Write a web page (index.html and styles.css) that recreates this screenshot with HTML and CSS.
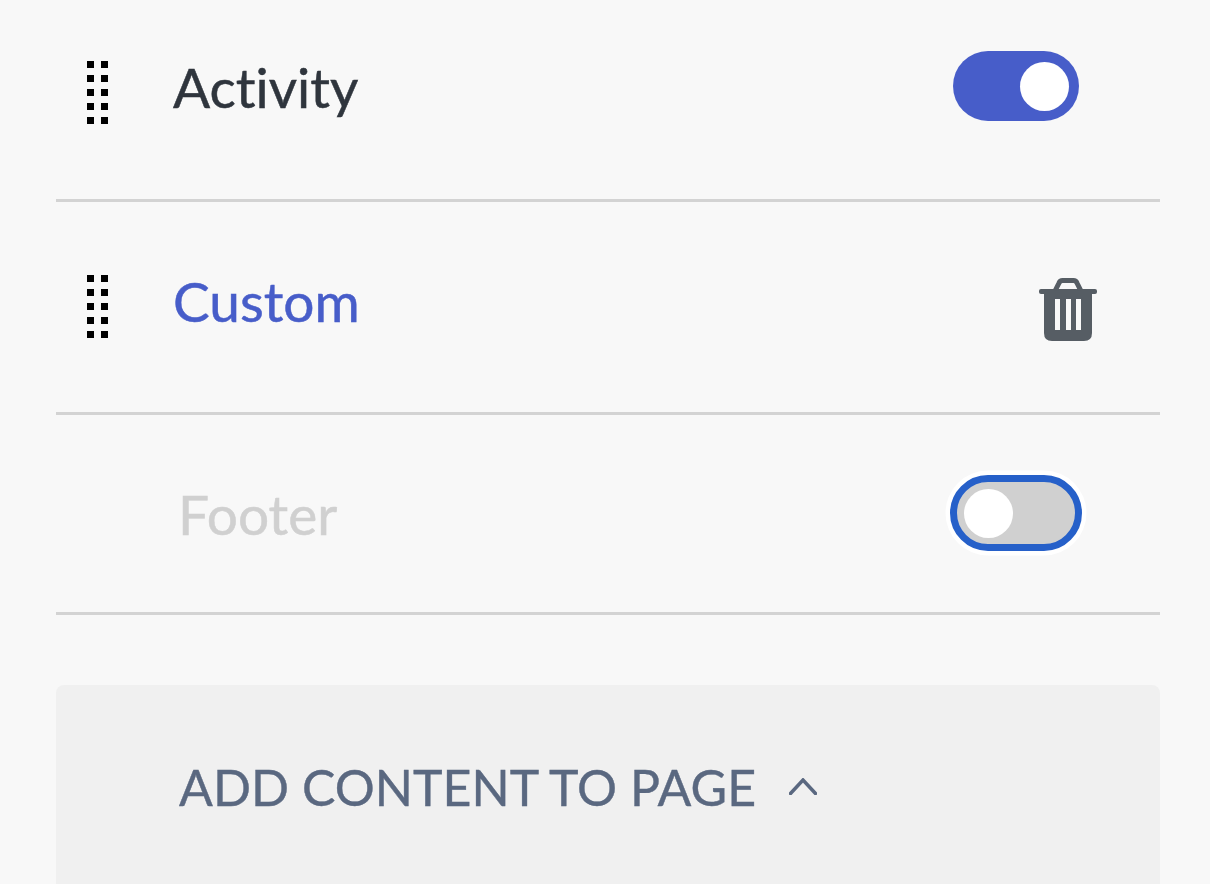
FILE: index.html
```html
<!DOCTYPE html>
<html lang="en">
<head>
<meta charset="utf-8">
<title>Page sections</title>
<link rel="stylesheet" href="styles.css">
</head>
<body>
<main class="page">
  <section class="row row-activity">
    <svg class="grip" viewBox="0 0 22 63" aria-hidden="true"><path d="M0 0h7v7H0zM14 0h7v7h-7zM0 14h7v7H0zM14 14h7v7h-7zM0 28h7v7H0zM14 28h7v7h-7zM0 42h7v7H0zM14 42h7v7h-7zM0 56h7v7H0zM14 56h7v7h-7z"/></svg>
    <span class="label">Activity</span>
    <span class="toggle toggle-on"><span class="knob"></span></span>
  </section>
  <section class="row row-custom">
    <svg class="grip" viewBox="0 0 22 63" aria-hidden="true"><path d="M0 0h7v7H0zM14 0h7v7h-7zM0 14h7v7H0zM14 14h7v7h-7zM0 28h7v7H0zM14 28h7v7h-7zM0 42h7v7H0zM14 42h7v7h-7zM0 56h7v7H0zM14 56h7v7h-7z"/></svg>
    <span class="label label-link">Custom</span>
    <svg class="trash" viewBox="0 0 58 63" aria-hidden="true">
      <rect y="11" width="58" height="5" rx="2"/>
      <path class="trash-handle" d="M16.5 12L20 5Q21 2.5 23.5 2.5H34.500Q37 2.5 38 5L41.500 12"/>
      <path fill-rule="evenodd" d="M5 16H53V55Q53 63 45 63H13Q5 63 5 55ZM16 21V52H21V21ZM27 21V52H32V21ZM37 21V52H42V21Z"/>
    </svg>
  </section>
  <section class="row row-footer">
    <span class="label label-muted">Footer</span>
    <span class="toggle toggle-off"><span class="knob"></span></span>
  </section>
  <section class="add-panel">
    <span class="add-title">ADD CONTENT TO PAGE</span>
    <svg class="chevron" viewBox="0 0 28 17" aria-hidden="true"><path d="M1.5 15.5L14 2L26.5 15.5"/></svg>
  </section>
</main>
</body>
</html>
```

FILE: styles.css
```css
* { box-sizing: border-box; }

html, body {
  margin: 0;
  height: 884px;
  overflow: hidden;
  background: #f8f8f8;
}

body {
  font-family: "Lato", "Noto Sans", sans-serif;
  font-variant-ligatures: none;
}

.page {
  padding: 0 50px 0 56px;
}

.row {
  display: flex;
  align-items: flex-start;
  border-bottom: 3px solid #d3d3d3;
}

.row-activity { height: 202px; padding: 51px 81px 0 31px; }
.row-custom { height: 213px; padding: 73px 63px 0 31px; }
.row-footer { height: 200px; padding: 63px 81px 0 124px; }

.grip {
  width: 22px;
  height: 63px;
  margin-top: 10px;
  margin-right: 64px;
  fill: #000;
  flex: none;
}

.row-custom .grip { margin-top: 0; }

.label {
  font-size: 55px;
  line-height: 70px;
  color: #2f353d;
  -webkit-text-stroke: 0.5px currentColor;
  margin-top: 1px;
  flex: 1;
}

.label-link { color: #475dc9; margin-top: -9px; }
.label-muted { color: #d0d0d0; margin-left: -2px; margin-right: 2px; }

.toggle {
  display: flex;
  align-items: center;
  width: 126px;
  height: 70px;
  border-radius: 35px;
  padding: 0 11px;
  flex: none;
}

.toggle-on {
  background: #475dc9;
  justify-content: flex-end;
  padding-right: 10px;
}

.toggle-off {
  background: #d0d0d0;
  outline: 7px solid #2660c9;
  outline-offset: -4px;
  box-shadow: 0 0 0 7.5px #fff;
}

.knob {
  width: 49px;
  height: 49px;
  border-radius: 50%;
  background: #fff;
}

.trash {
  width: 58px;
  height: 63px;
  margin-top: 3px;
  fill: #565d64;
  flex: none;
}

.trash-handle {
  fill: none;
  stroke: #565d64;
  stroke-width: 5;
}

.add-panel {
  display: flex;
  align-items: flex-start;
  height: 300px;
  margin-top: 70px;
  padding: 68px 0 0 123px;
  background: #f0f0f0;
  border-radius: 8px 8px 0 0;
}

.add-title {
  font-size: 50px;
  line-height: 68px;
  color: #5a6880;
  -webkit-text-stroke: 0.4px currentColor;
  letter-spacing: 0.05px;
}

.chevron {
  width: 28px;
  height: 17px;
  margin: 25px 0 0 33px;
  fill: none;
  stroke: #5a6880;
  stroke-width: 3.5;
  stroke-linecap: round;
  flex: none;
}
```
